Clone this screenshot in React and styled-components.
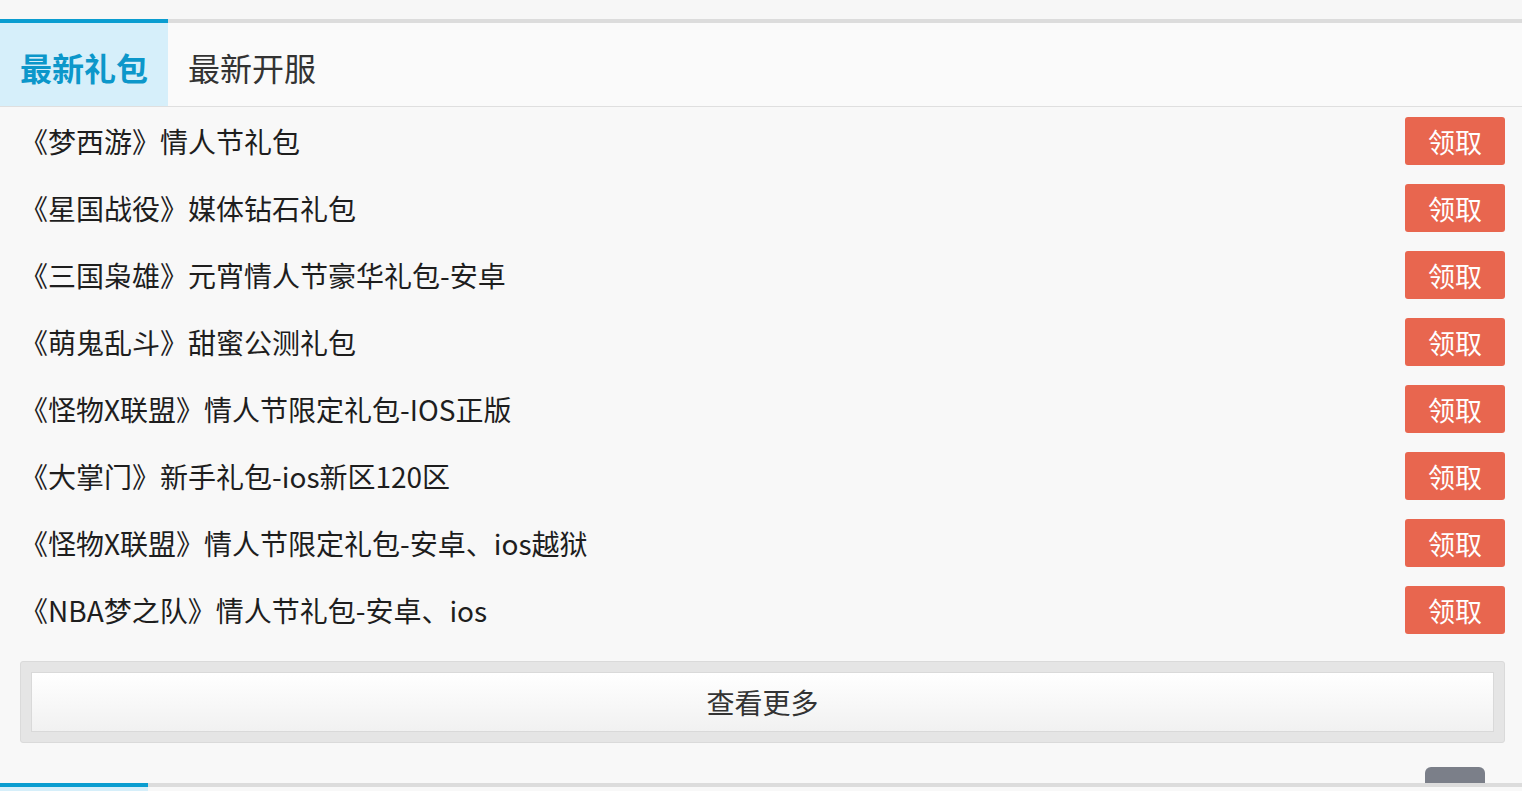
import styled, { createGlobalStyle } from 'styled-components'

const GlobalStyle = createGlobalStyle`
  html, body {
    margin: 0;
    padding: 0;
    background: #f7f7f7;
    font-family: "Noto Sans CJK SC", "Noto Sans", sans-serif;
    overflow: hidden;
  }
`

const Page = styled.div`
  padding-top: 19px;
  height: 791px;
  box-sizing: border-box;
`

const Section = styled.section`
  background: #f8f8f8;
`

const TabBar = styled.div`
  display: flex;
  height: 88px;
  border-top: 4px solid #dcdcdc;
  border-bottom: 1px solid #dfdfdf;
  background: #fafafa;
  box-sizing: border-box;
`

const Tab = styled.div`
  display: flex;
  align-items: center;
  justify-content: center;
  width: ${p => p.$width}px;
  margin-top: -4px;
  border-top: 4px solid ${p => (p.$active ? '#0a9dd0' : 'transparent')};
  background: ${p => (p.$active ? '#d6effa' : 'transparent')};
  color: ${p => (p.$active ? '#0c97ca' : '#333')};
  font-size: 32px;
  font-weight: ${p => (p.$active ? 700 : 400)};
  line-height: 1;
  padding-top: 4px;
`

const List = styled.ul`
  list-style: none;
  margin: 0;
  padding: 0 17px 0 20px;
`

const Row = styled.li`
  display: flex;
  align-items: center;
  justify-content: space-between;
  height: 67px;
`

const Title = styled.span`
  font-size: 28px;
  color: #1e1e1e;
  margin-top: 1px;
`

const GetButton = styled.button`
  width: 100px;
  height: 48px;
  margin-top: 1px;
  border: none;
  border-radius: 3px;
  background: #e8664f;
  color: #fff;
  font-family: inherit;
  font-size: 27px;
  line-height: 1;
  padding: 0;
`

const MoreWrap = styled.div`
  margin: 18px 17px 0 20px;
  padding: 10px;
  background: #e5e5e5;
  border: 1px solid #dadada;
  border-radius: 3px;
`

const MoreButton = styled.div`
  height: 58px;
  display: flex;
  align-items: center;
  justify-content: center;
  background: linear-gradient(#ffffff, #f1f1f1);
  border: 1px solid #d9d9d9;
  color: #333;
  font-size: 28px;
`

const Footer = styled.div`
  display: flex;
  justify-content: flex-end;
  padding: 24px 37px 0 0;
`

const TopHandle = styled.div`
  width: 60px;
  height: 16px;
  background: #7b7f89;
  border-radius: 6px 6px 0 0;
`

const NextBar = styled.div`
  display: flex;
  height: 8px;
  border-top: 4px solid #dcdcdc;
  box-sizing: border-box;
`

const NextTab = styled.div`
  width: 148px;
  margin-top: -4px;
  border-top: 4px solid #0a9dd0;
  background: #d6effa;
`

const gifts = [
  '《梦西游》情人节礼包',
  '《星国战役》媒体钻石礼包',
  '《三国枭雄》元宵情人节豪华礼包-安卓',
  '《萌鬼乱斗》甜蜜公测礼包',
  '《怪物X联盟》情人节限定礼包-IOS正版',
  '《大掌门》新手礼包-ios新区120区',
  '《怪物X联盟》情人节限定礼包-安卓、ios越狱',
  '《NBA梦之队》情人节礼包-安卓、ios'
]

export default function App () {
  return (
    <Page>
      <GlobalStyle />
      <Section>
        <TabBar>
          <Tab $active $width={168}>最新礼包</Tab>
          <Tab $width={168}>最新开服</Tab>
        </TabBar>
        <List>
          {gifts.map(name => (
            <Row key={name}>
              <Title>{name}</Title>
              <GetButton>领取</GetButton>
            </Row>
          ))}
        </List>
        <MoreWrap>
          <MoreButton>查看更多</MoreButton>
        </MoreWrap>
        <Footer>
          <TopHandle />
        </Footer>
        <NextBar>
          <NextTab />
        </NextBar>
      </Section>
    </Page>
  )
}
